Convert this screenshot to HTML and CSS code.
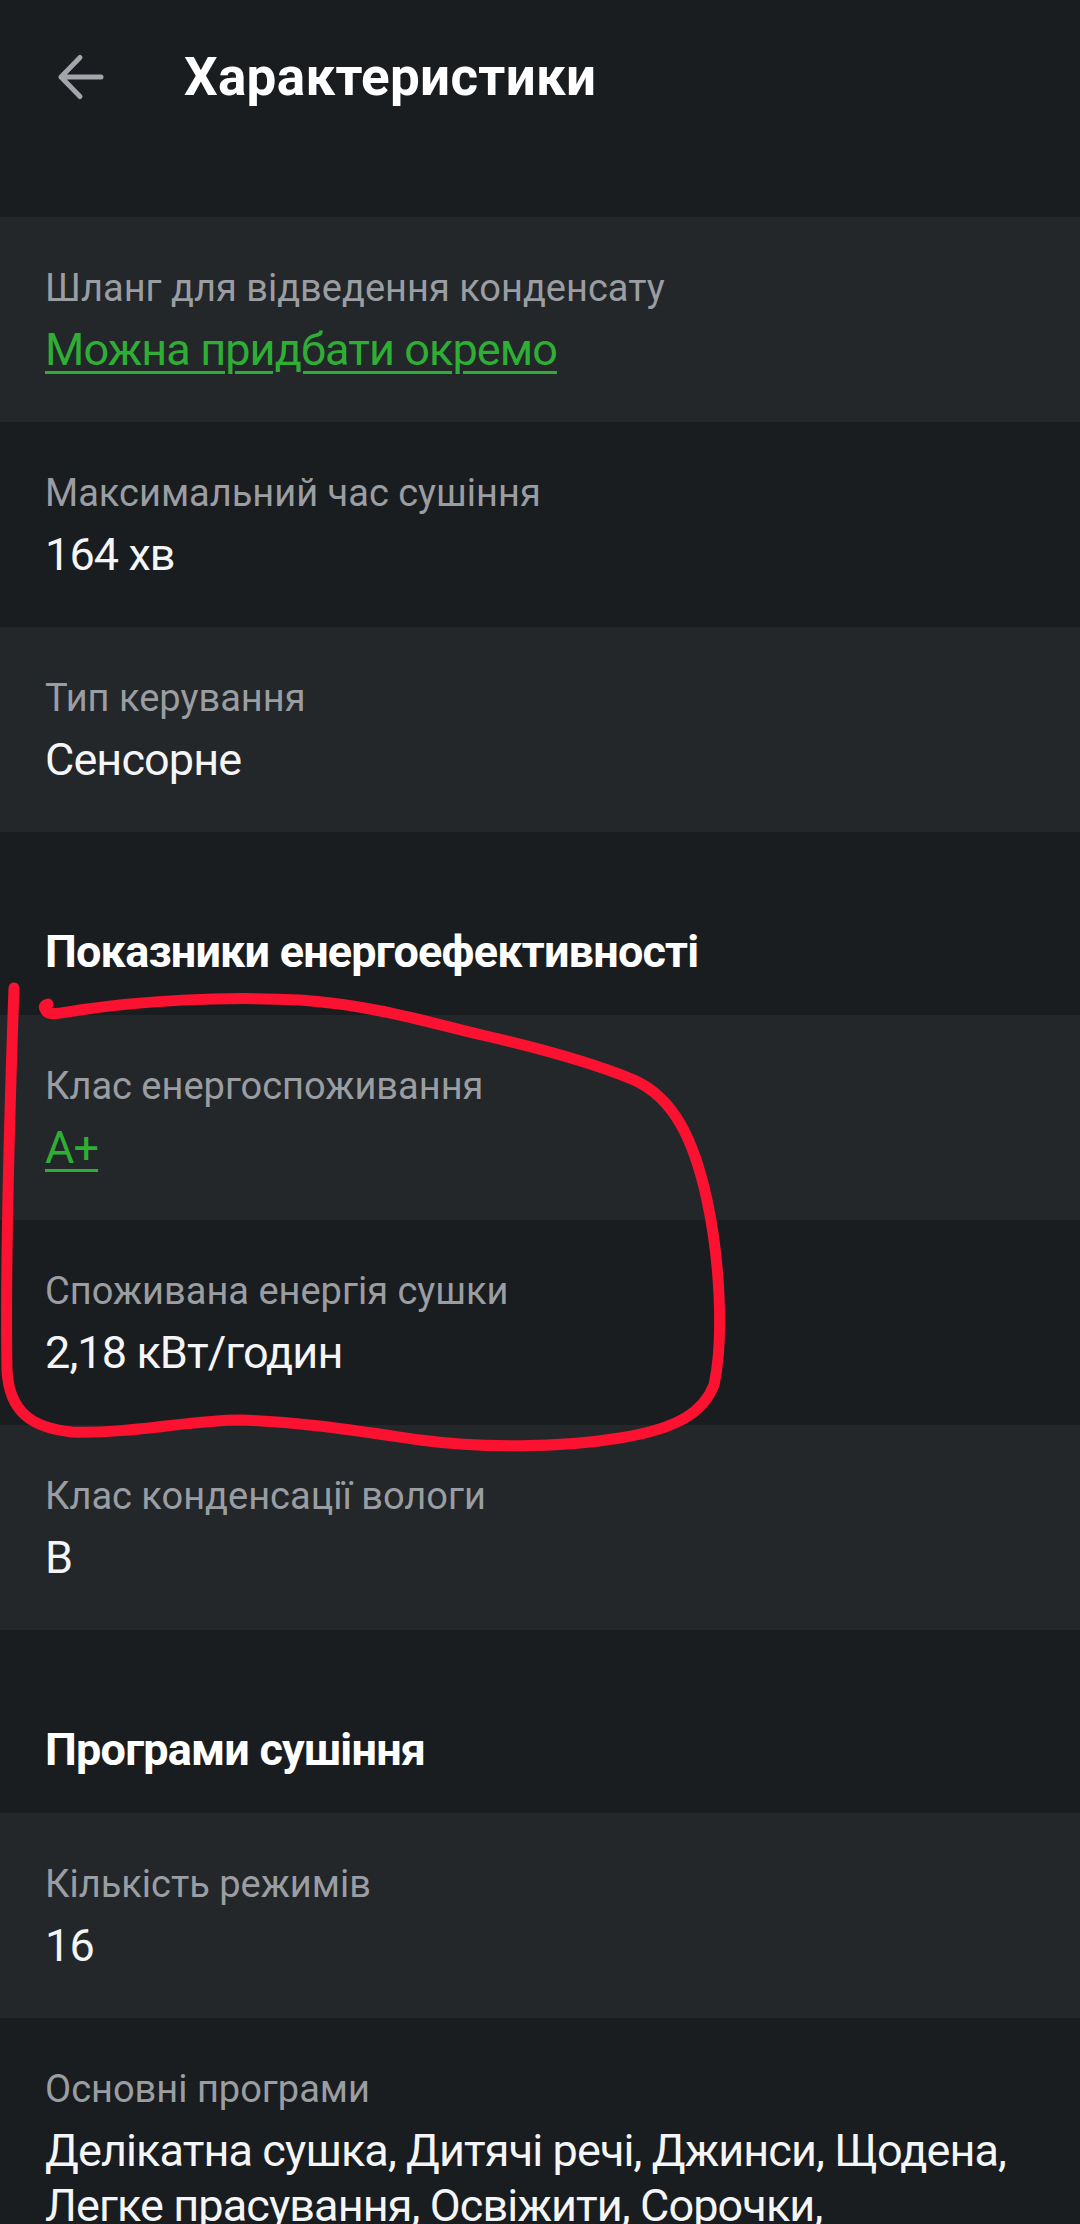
FILE: index.html
```html
<!DOCTYPE html>
<html lang="uk">
<head>
<meta charset="utf-8">
<title>Характеристики</title>
<link rel="stylesheet" href="styles.css">
</head>
<body>
<div class="app">
  <header class="topbar">
    <svg class="back" viewBox="0 0 48 48" width="48" height="48" aria-hidden="true">
      <path d="M45 24 H5 M5 24 L24 4.5 M5 24 L24 43.5" fill="none" stroke="#a2a6aa" stroke-width="5" stroke-linecap="round" stroke-linejoin="round"/>
    </svg>
    <h1 class="title">Характеристики</h1>
  </header>

  <section class="group">
    <div class="row">
      <div class="label">Шланг для відведення конденсату</div>
      <div class="value link">Можна придбати окремо</div>
    </div>
    <div class="row">
      <div class="label">Максимальний час сушіння</div>
      <div class="value">164 хв</div>
    </div>
    <div class="row">
      <div class="label">Тип керування</div>
      <div class="value">Сенсорне</div>
    </div>
  </section>

  <h2 class="section-title">Показники енергоефективності</h2>
  <section class="group">
    <div class="row">
      <div class="label">Клас енергоспоживання</div>
      <div class="value link">A+</div>
    </div>
    <div class="row">
      <div class="label">Споживана енергія сушки</div>
      <div class="value">2,18 кВт/годин</div>
    </div>
    <div class="row">
      <div class="label">Клас конденсації вологи</div>
      <div class="value">B</div>
    </div>
  </section>

  <h2 class="section-title">Програми сушіння</h2>
  <section class="group">
    <div class="row">
      <div class="label">Кількість режимів</div>
      <div class="value">16</div>
    </div>
    <div class="row">
      <div class="label">Основні програми</div>
      <div class="value">Делікатна сушка, Дитячі речі, Джинси, Щодена, Легке прасування, Освіжити, Сорочки, Синтетика, Бавовна, Вовна</div>
    </div>
  </section>

  <svg class="annotation" viewBox="0 0 1080 2224" width="1080" height="2224" aria-hidden="true">
    <path d="M14 988 C10 1100 5 1250 7 1370 C9 1412 32 1428 72 1432 C132 1434 190 1420 241 1420 C300 1422 344 1429 420 1440 C480 1448 560 1448 620 1438 C682 1428 704 1410 714 1385 C724 1340 720 1260 707 1200 C694 1140 674 1098 634 1080 C586 1060 530 1046 482 1035 C420 1020 370 1005 300 1000 C220 996 140 1001 80 1010 C60 1013 50 1016 46 1011 C43 1007 44 1005 48 1004" fill="none" stroke="#fb1230" stroke-width="11" stroke-linecap="round" stroke-linejoin="round"/>
  </svg>
</div>
</body>
</html>
```

FILE: styles.css
```css
* { box-sizing: border-box; }

html, body {
  margin: 0;
  padding: 0;
  background: #1a1d20;
}

body {
  font-family: Roboto, "Noto Sans", "Liberation Sans", sans-serif;
  color: #f2f3f4;
}

.app {
  position: relative;
  width: 1080px;
  height: 2224px;
  overflow: hidden;
  background: #1a1d20;
}

.topbar {
  display: flex;
  align-items: center;
  height: 217px;
  padding: 0 0 63px 56px;
}

.back {
  flex: none;
  display: block;
}

.title {
  margin: 0 0 0 80px;
  font-size: 53px;
  font-weight: 700;
  line-height: 60px;
  color: #ffffff;
  letter-spacing: 0.3px;
}

.group {
  display: flex;
  flex-direction: column;
}

.row {
  padding: 46px 45px 45px;
  background: #1a1d20;
}

.row:nth-child(odd) {
  background: #23272a;
}

.label {
  font-size: 38px;
  line-height: 50px;
  color: #9a9ea2;
}

.value {
  margin-top: 9px;
  font-size: 45px;
  line-height: 55px;
  letter-spacing: -0.9px;
  color: #f4f5f6;
}

.link {
  color: #2fae35;
  text-decoration: underline;
  text-decoration-thickness: 3px;
  text-underline-offset: 6px;
}

.section-title {
  margin: 0;
  padding: 92px 45px 35px;
  font-size: 45px;
  font-weight: 700;
  line-height: 56px;
  letter-spacing: -0.8px;
  color: #ffffff;
}

.annotation {
  position: absolute;
  left: 0;
  top: 0;
  pointer-events: none;
}
```
